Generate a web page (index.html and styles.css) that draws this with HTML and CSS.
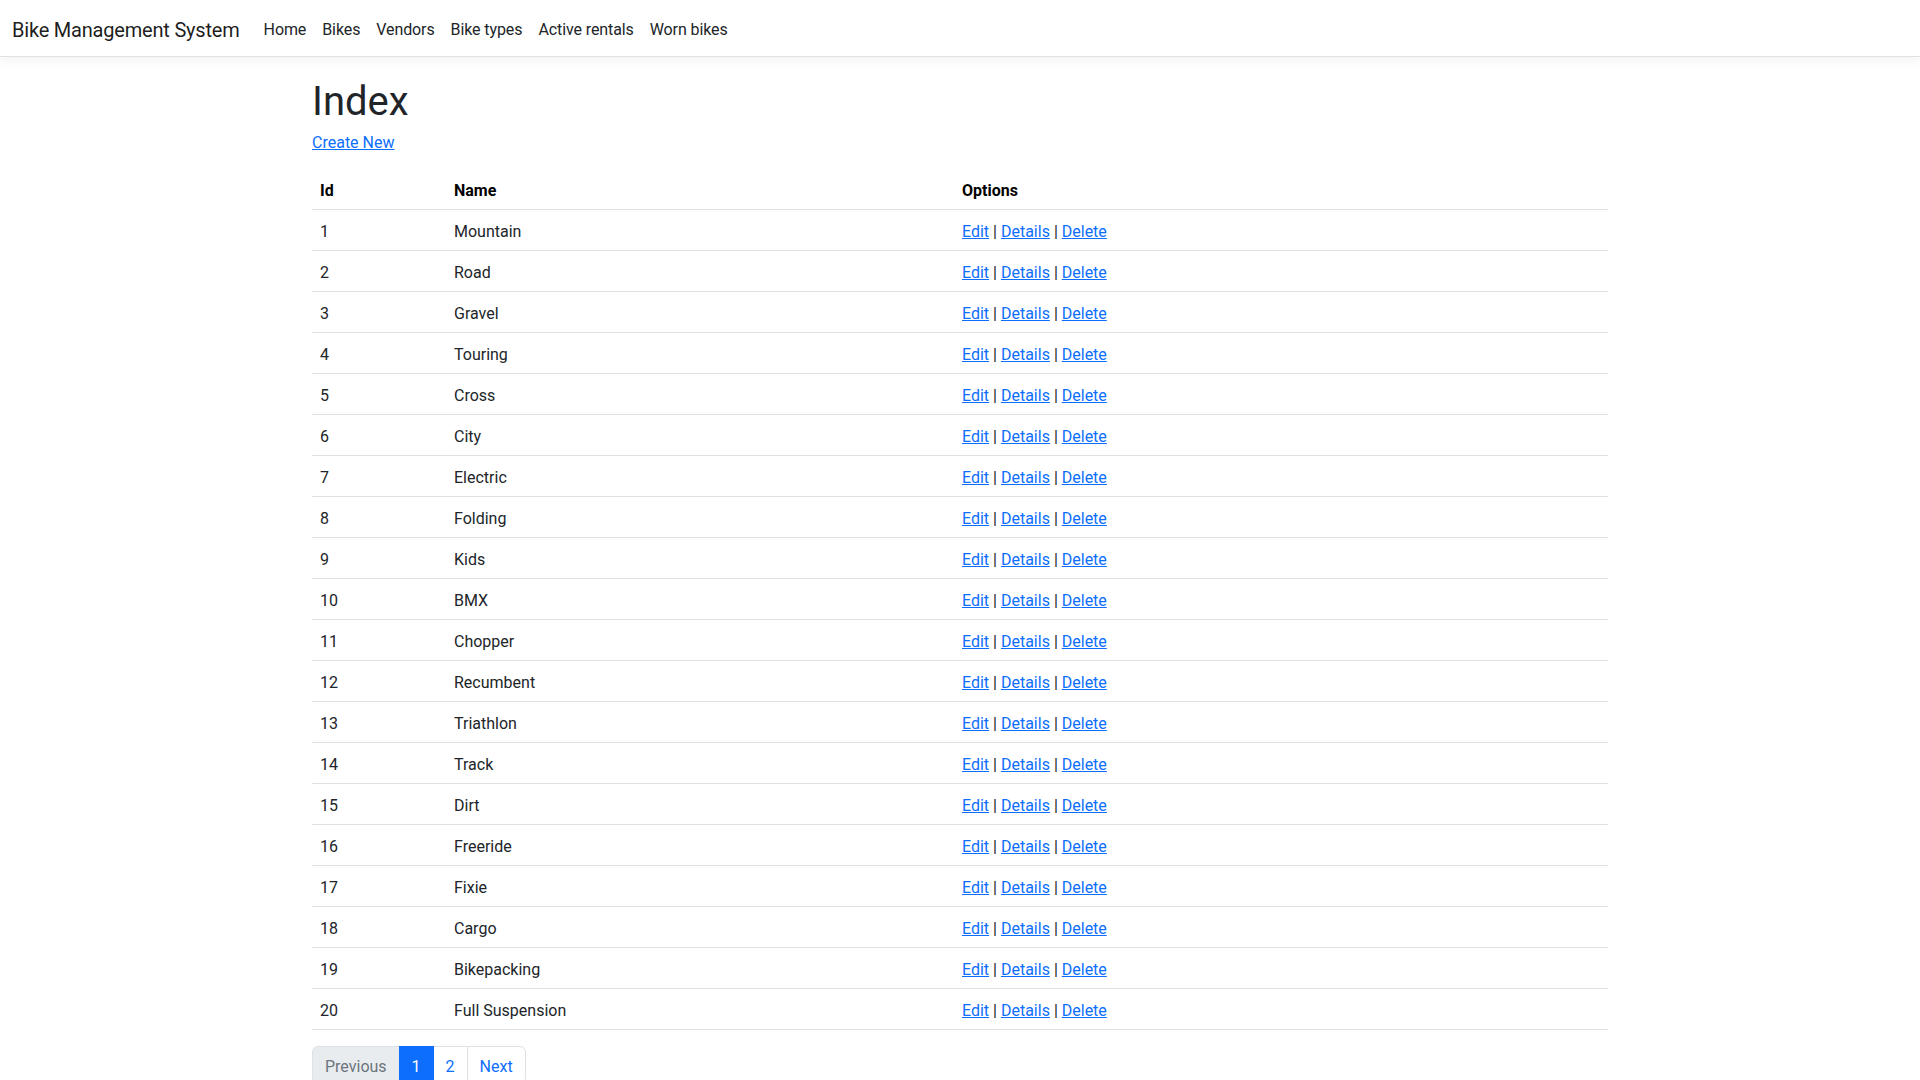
FILE: index.html
```html
<!DOCTYPE html>
<html lang="en">
<head>
<meta charset="utf-8">
<title>Index - Bike Management System</title>
<link rel="stylesheet" href="styles.css">
</head>
<body>
<header>
  <nav class="navbar">
    <a class="brand" href="#">Bike Management System</a>
    <ul class="nav">
      <li><a class="nav-link" href="#">Home</a></li>
      <li><a class="nav-link" href="#">Bikes</a></li>
      <li><a class="nav-link" href="#">Vendors</a></li>
      <li><a class="nav-link" href="#">Bike types</a></li>
      <li><a class="nav-link" href="#">Active rentals</a></li>
      <li><a class="nav-link" href="#">Worn bikes</a></li>
    </ul>
  </nav>
</header>
<div class="container">
  <main>
    <h1 class="title">Index</h1>
    <p class="create"><a href="#">Create New</a></p>
    <table class="table">
      <thead>
        <tr><th class="col-id">Id</th><th class="col-name">Name</th><th class="col-opt">Options</th></tr>
      </thead>
      <tbody>
        <tr><td>1</td><td>Mountain</td><td><a href="#">Edit</a> | <a href="#">Details</a> | <a href="#">Delete</a></td></tr>
        <tr><td>2</td><td>Road</td><td><a href="#">Edit</a> | <a href="#">Details</a> | <a href="#">Delete</a></td></tr>
        <tr><td>3</td><td>Gravel</td><td><a href="#">Edit</a> | <a href="#">Details</a> | <a href="#">Delete</a></td></tr>
        <tr><td>4</td><td>Touring</td><td><a href="#">Edit</a> | <a href="#">Details</a> | <a href="#">Delete</a></td></tr>
        <tr><td>5</td><td>Cross</td><td><a href="#">Edit</a> | <a href="#">Details</a> | <a href="#">Delete</a></td></tr>
        <tr><td>6</td><td>City</td><td><a href="#">Edit</a> | <a href="#">Details</a> | <a href="#">Delete</a></td></tr>
        <tr><td>7</td><td>Electric</td><td><a href="#">Edit</a> | <a href="#">Details</a> | <a href="#">Delete</a></td></tr>
        <tr><td>8</td><td>Folding</td><td><a href="#">Edit</a> | <a href="#">Details</a> | <a href="#">Delete</a></td></tr>
        <tr><td>9</td><td>Kids</td><td><a href="#">Edit</a> | <a href="#">Details</a> | <a href="#">Delete</a></td></tr>
        <tr><td>10</td><td>BMX</td><td><a href="#">Edit</a> | <a href="#">Details</a> | <a href="#">Delete</a></td></tr>
        <tr><td>11</td><td>Chopper</td><td><a href="#">Edit</a> | <a href="#">Details</a> | <a href="#">Delete</a></td></tr>
        <tr><td>12</td><td>Recumbent</td><td><a href="#">Edit</a> | <a href="#">Details</a> | <a href="#">Delete</a></td></tr>
        <tr><td>13</td><td>Triathlon</td><td><a href="#">Edit</a> | <a href="#">Details</a> | <a href="#">Delete</a></td></tr>
        <tr><td>14</td><td>Track</td><td><a href="#">Edit</a> | <a href="#">Details</a> | <a href="#">Delete</a></td></tr>
        <tr><td>15</td><td>Dirt</td><td><a href="#">Edit</a> | <a href="#">Details</a> | <a href="#">Delete</a></td></tr>
        <tr><td>16</td><td>Freeride</td><td><a href="#">Edit</a> | <a href="#">Details</a> | <a href="#">Delete</a></td></tr>
        <tr><td>17</td><td>Fixie</td><td><a href="#">Edit</a> | <a href="#">Details</a> | <a href="#">Delete</a></td></tr>
        <tr><td>18</td><td>Cargo</td><td><a href="#">Edit</a> | <a href="#">Details</a> | <a href="#">Delete</a></td></tr>
        <tr><td>19</td><td>Bikepacking</td><td><a href="#">Edit</a> | <a href="#">Details</a> | <a href="#">Delete</a></td></tr>
        <tr><td>20</td><td>Full Suspension</td><td><a href="#">Edit</a> | <a href="#">Details</a> | <a href="#">Delete</a></td></tr>
      </tbody>
    </table>
    <ul class="pagination">
      <li class="page-item disabled"><span class="page-link">Previous</span></li>
      <li class="page-item active"><span class="page-link">1</span></li>
      <li class="page-item"><a class="page-link" href="#">2</a></li>
      <li class="page-item"><a class="page-link" href="#">Next</a></li>
    </ul>
  </main>
</div>
</body>
</html>
```
FILE: styles.css
```css
*, *::before, *::after { box-sizing: border-box; }

html, body {
  margin: 0;
  padding: 0;
}

body {
  font-family: Roboto, "Liberation Sans", sans-serif;
  font-size: 16px;
  line-height: 1.5;
  color: #212529;
  background: #fff;
}

a { color: #0d6efd; }

.navbar {
  display: flex;
  align-items: center;
  height: 57px;
  padding: 8px 12px;
  background: #fff;
  border-bottom: 1px solid #dee2e6;
  box-shadow: 0 4px 12px rgba(0, 0, 0, 0.05);
  margin-bottom: 16px;
}

.brand {
  font-size: 20px;
  line-height: 30px;
  padding: 7px 0 3px;
  margin-right: 16px;
  letter-spacing: -0.2px;
  color: rgba(0, 0, 0, 0.9);
  text-decoration: none;
  white-space: nowrap;
}

.nav {
  display: flex;
  list-style: none;
  margin: 0;
  padding: 0;
}

.nav-link {
  display: block;
  padding: 10px 8px 6px;
  letter-spacing: -0.1px;
  color: #212529;
  text-decoration: none;
}

.container {
  width: 1320px;
  margin: 0 auto;
  padding: 0 12px;
}

main { padding-bottom: 16px; }

.title {
  font-size: 40px;
  font-weight: 400;
  line-height: 1.2;
  margin: 0 0 3px;
  padding-top: 5px;
}

.create {
  margin: 0 0 14px;
  padding-top: 2px;
}

.table {
  width: 100%;
  border-collapse: collapse;
  margin-bottom: 16px;
  color: #212529;
}

.table th,
.table td {
  padding: 10px 8px 6px;
  text-align: left;
  vertical-align: top;
  border-bottom: 1px solid #dee2e6;
}

.table th { font-weight: 700; color: #000; }

.col-id { width: 134px; }
.col-name { width: 508px; }

.pagination {
  display: flex;
  list-style: none;
  margin: 0;
  padding: 0;
}

.page-link {
  display: block;
  padding: 8px 12px 4px;
  line-height: 24px;
  border: 1px solid #dee2e6;
  background: #fff;
  color: #0d6efd;
  text-decoration: none;
}

.page-item + .page-item .page-link { margin-left: -1px; }

.page-item:first-child .page-link {
  border-top-left-radius: 6px;
  border-bottom-left-radius: 6px;
}

.page-item:last-child .page-link {
  border-top-right-radius: 6px;
  border-bottom-right-radius: 6px;
}

.page-item.disabled .page-link {
  color: #6c757d;
  background: #e9ecef;
}

.page-item.active .page-link {
  position: relative;
  z-index: 1;
  color: #fff;
  background: #0d6efd;
  border-color: #0d6efd;
}
```
